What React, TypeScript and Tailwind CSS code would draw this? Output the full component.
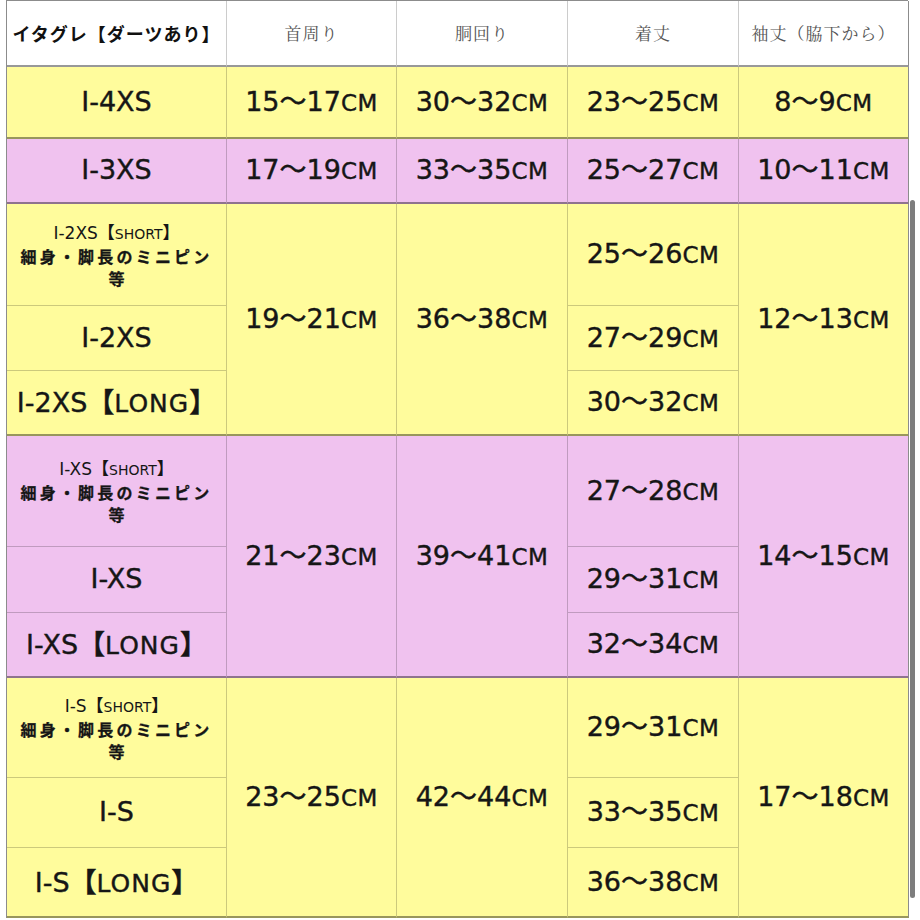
import React from "react";

type Bg = "y" | "p" | "w";

const bgClass: Record<Bg, string> = {
  y: "bg-[#fffc9c]",
  p: "bg-[#f0c2ef]",
  w: "bg-white",
};

const NUM =
  "font-['DejaVu_Sans','Noto_Sans_CJK_JP',sans-serif] text-[27px] text-[#161616] [-webkit-text-stroke:0.4px_#161616]";
const JP = "font-['Noto_Sans_CJK_JP',sans-serif]";

function Num({ v }: { v: string }) {
  return (
    <span className={NUM + " whitespace-nowrap"}>
      {v}
      <span className="text-[23px] tracking-[0.5px]">CM</span>
    </span>
  );
}

function Size({ name, tail }: { name: string; tail?: string }) {
  return (
    <span className={NUM + " whitespace-nowrap"}>
      {name}
      {tail && (
        <>
          <span className={JP + " font-bold"}>【</span>
          <span className="text-[25px] tracking-[1px]">{tail}</span>
          <span className={JP + " font-bold"}>】</span>
        </>
      )}
    </span>
  );
}

function ShortLabel({ name }: { name: string }) {
  return (
    <div className="flex flex-col items-center leading-[22px] text-[#161616]">
      <span className="font-['DejaVu_Sans',sans-serif] text-[17px] whitespace-nowrap">
        {name}
        <span className={JP + " font-bold"}>【</span>
        <span className="text-[14px]">SHORT</span>
        <span className={JP + " font-bold"}>】</span>
      </span>
      <span className={JP + " text-[16px] font-bold tracking-[3.2px] whitespace-nowrap [-webkit-text-stroke:0.3px_#161616]"}>
        細身・脚長のミニピン
      </span>
      <span className={JP + " text-[16px] font-bold [-webkit-text-stroke:0.3px_#161616]"}>等</span>
    </div>
  );
}

function Cell({
  bg,
  main,
  span,
  last,
  children,
}: {
  bg: Bg;
  main?: boolean;
  span?: boolean;
  last?: boolean;
  children: React.ReactNode;
}) {
  const cls = [
    "flex items-center justify-center overflow-hidden",
    bgClass[bg],
    last ? "border-r border-r-[#8c8c8c]" : "border-r border-r-black/20",
    main ? "border-b-2 border-b-black/40" : "border-b border-b-black/20",
    span ? "row-span-3" : "",
  ].join(" ");
  return <div className={cls}>{children}</div>;
}

const groups = [
  {
    bg: "y" as Bg,
    name: "I-2XS",
    neck: "19～21",
    chest: "36～38",
    len: ["25～26", "27～29", "30～32"],
    sleeve: "12～13",
  },
  {
    bg: "p" as Bg,
    name: "I-XS",
    neck: "21～23",
    chest: "39～41",
    len: ["27～28", "29～31", "32～34"],
    sleeve: "14～15",
  },
  {
    bg: "y" as Bg,
    name: "I-S",
    neck: "23～25",
    chest: "42～44",
    len: ["29～31", "33～35", "36～38"],
    sleeve: "17～18",
  },
];

const headers = ["首周り", "胴回り", "着丈", "袖丈（脇下から）"];

export default function App() {
  return (
    <div className="relative h-[920px] w-[920px] bg-white">
      <div className="ml-[6px] grid w-[902px] grid-cols-[220px_170px_171px_171px_170px] grid-rows-[66px_72px_65px_102px_65px_65px_111px_66px_65px_100px_70px_70px] border-l border-t border-[#8c8c8c]">
        <Cell bg="w" main>
          <span className={JP + " text-[18px] font-bold tracking-[1px] text-[#111] whitespace-nowrap"}>
            イタグレ【ダーツあり】
          </span>
        </Cell>
        {headers.map((h, i) => (
          <Cell key={h} bg="w" main last={i === 3}>
            <span className="font-['Noto_Serif_CJK_JP','Noto_Sans_CJK_JP',serif] text-[17px] text-[#555] whitespace-nowrap tracking-[1px]">
              {h}
            </span>
          </Cell>
        ))}

        <Cell bg="y" main>
          <Size name="I-4XS" />
        </Cell>
        <Cell bg="y" main><Num v="15～17" /></Cell>
        <Cell bg="y" main><Num v="30～32" /></Cell>
        <Cell bg="y" main><Num v="23～25" /></Cell>
        <Cell bg="y" main last><Num v="8～9" /></Cell>

        <Cell bg="p" main>
          <Size name="I-3XS" />
        </Cell>
        <Cell bg="p" main><Num v="17～19" /></Cell>
        <Cell bg="p" main><Num v="33～35" /></Cell>
        <Cell bg="p" main><Num v="25～27" /></Cell>
        <Cell bg="p" main last><Num v="10～11" /></Cell>

        {groups.map((g) => (
          <React.Fragment key={g.name}>
            <Cell bg={g.bg}>
              <ShortLabel name={g.name} />
            </Cell>
            <Cell bg={g.bg} main span><Num v={g.neck} /></Cell>
            <Cell bg={g.bg} main span><Num v={g.chest} /></Cell>
            <Cell bg={g.bg}><Num v={g.len[0]} /></Cell>
            <Cell bg={g.bg} main span last><Num v={g.sleeve} /></Cell>

            <Cell bg={g.bg}>
              <Size name={g.name} />
            </Cell>
            <Cell bg={g.bg}><Num v={g.len[1]} /></Cell>

            <Cell bg={g.bg} main>
              <Size name={g.name} tail="LONG" />
            </Cell>
            <Cell bg={g.bg} main><Num v={g.len[2]} /></Cell>
          </React.Fragment>
        ))}
      </div>
      <div className="absolute left-[910px] top-[200px] h-[698px] w-[5px] rounded-full bg-[#7d7d7d]" />
    </div>
  );
}
